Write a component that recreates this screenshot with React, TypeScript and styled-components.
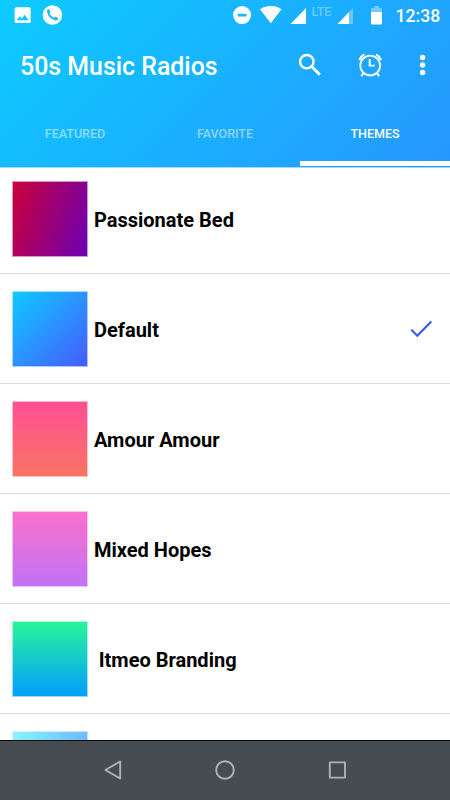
import React from "react";
import styled, { createGlobalStyle } from "styled-components";

const GlobalStyle = createGlobalStyle`
  * { box-sizing: border-box; }
  body { margin: 0; background: #fff; font-family: Roboto, sans-serif; }
`;

const Screen = styled.div`
  width: 450px;
  height: 800px;
  display: flex;
  flex-direction: column;
  overflow: hidden;
  background: #fff;
`;

const Header = styled.header`
  position: relative;
  z-index: 1;
  flex: none;
  height: 168px;
  display: flex;
  flex-direction: column;
  background: linear-gradient(135deg, #0dcbff 0%, #1ab0ff 52%, #2697ff 100%);
  border-bottom: 1px solid #a3d8ff;
  color: #fff;
`;

const StatusBar = styled.div`
  height: 32px;
  display: flex;
  align-items: flex-start;
`;

const Icon = styled.svg<{ $gap?: number }>`
  display: block;
  flex: none;
  margin-left: ${(p) => p.$gap ?? 0}px;
`;

const Network = styled.span`
  width: 20px;
  margin: 4px 0 0 4.5px;
  font-size: 12.5px;
  line-height: 16px;
  font-weight: 500;
  white-space: nowrap;
  color: rgba(255, 255, 255, 0.36);
`;

const Clock = styled.span`
  margin: 5px 0 0 12.5px;
  font-size: 17.6px;
  line-height: 22px;
  font-weight: 500;
  white-space: nowrap;
`;

const Toolbar = styled.div`
  height: 68px;
  display: flex;
  align-items: center;
  padding-left: 20px;
`;

const Title = styled.h1`
  margin: 0;
  width: 278px;
  padding-top: 2px;
  font-size: 24.9px;
  line-height: 30px;
  font-weight: 500;
  white-space: nowrap;
`;

const Tabs = styled.nav`
  height: 66px;
  display: grid;
  grid-template-columns: repeat(3, 1fr);
`;

const Tab = styled.div<{ $active?: boolean }>`
  display: flex;
  align-items: center;
  justify-content: center;
  padding-top: 6px;
  border-bottom: 5px solid ${(p) => (p.$active ? "#fff" : "transparent")};
  font-size: 12.5px;
  font-weight: 500;
  color: ${(p) => (p.$active ? "#fff" : "rgba(255,255,255,0.5)")};
`;

const ThemeList = styled.main`
  flex: 1;
  min-height: 0;
  margin-top: -4px;
  overflow: hidden;
`;

const ThemeRow = styled.div`
  height: 110px;
  display: flex;
  align-items: center;
  padding: 0 16px 0 12px;
  border-bottom: 1px solid #d9d9d9;
`;

const Swatch = styled.div<{ $fill: string }>`
  flex: none;
  width: 76px;
  height: 76px;
  margin-top: 1px;
  border: 1px solid rgba(255, 255, 255, 0.6);
  background: ${(p) => p.$fill} border-box;
`;

const Name = styled.span<{ $indent?: number }>`
  flex: 1;
  margin-left: ${(p) => 6 + (p.$indent ?? 0)}px;
  padding-top: 2px;
  font-size: 20px;
  line-height: 24px;
  font-weight: 700;
  color: #000;
  white-space: nowrap;
`;

const NavBar = styled.footer`
  flex: none;
  height: 60px;
  display: flex;
  align-items: center;
  justify-content: center;
  padding-bottom: 1px;
  gap: 88px;
  background: #454d52;
  border-top: 1px solid #050606;
`;

const themes = [
  { name: "Passionate Bed", fill: "linear-gradient(109deg, #cc0038, #6a00b4)" },
  { name: "Default", fill: "linear-gradient(135deg, #0dcbff, #485aff)", selected: true },
  { name: "Amour Amour", fill: "linear-gradient(#ff4f96, #f97462)" },
  { name: "Mixed Hopes", fill: "linear-gradient(#fa70cb, #c172f7)" },
  { name: "Itmeo Branding", fill: "linear-gradient(#2af598, #009efd)", indent: 4.7 },
  { name: "", fill: "linear-gradient(110deg, #89f7fe, #66a6ff)" },
];

export default function App() {
  return (
    <>
      <GlobalStyle />
      <Screen>
        <Header>
          <StatusBar>
            <Icon $gap={14} width="17" height="32" viewBox="14 0 17 32">
              <path fill="#fff" fillRule="evenodd" d="M16.2 7.3h12.9a1.6 1.6 0 0 1 1.6 1.6v12.5a1.6 1.6 0 0 1-1.6 1.6H16.2a1.6 1.6 0 0 1-1.6-1.6V8.9a1.6 1.6 0 0 1 1.6-1.6zM16.6 20.3h12l-3.9-5.5-2.8 3.7-2-2.3z" />
            </Icon>
            <Icon $gap={11} width="21" height="32" viewBox="42 0 21 32">
              <circle cx="52.4" cy="15" r="9.8" fill="#fff" />
              <path transform="translate(45.2 7.8) scale(.6)" fill="#19bdff" d="M7.5 9.5c1.2 2.8 3.6 5.4 6.6 7l2.7-1.6c.5-.3 1-.2 1.4.1l3 2.1c.5.4.6 1 .3 1.5-.8 1.5-2.2 2.6-3.9 2.4C10.5 20.3 3.5 13 3 5.9 2.9 4.3 3.9 3 5.3 2.3c.5-.2 1.1-.1 1.4.4l1.9 3.1c.3.4.3 1 0 1.4z" />
            </Icon>
            <Icon $gap={169} width="20" height="32" viewBox="232 0 20 32">
              <circle cx="242.1" cy="15.1" r="9" fill="#fff" />
              <rect x="237.6" y="13.8" width="9" height="2.7" rx=".6" fill="#1bbaff" />
            </Icon>
            <Icon $gap={7} width="24" height="32" viewBox="259 0 24 32">
              <path fill="#fff" d="M260 9.2C266.5 5 275 5 281.5 9.200L270.8 23.2z" />
            </Icon>
            <Icon $gap={7} width="17" height="32" viewBox="290 0 17 32">
              <path fill="#fff" d="M306 8v16h-15.5z" />
            </Icon>
            <Network>LTE</Network>
            <Icon $gap={5.5} width="17" height="32" viewBox="337 0 17 32">
              <path fill="#fff" opacity=".35" d="M353 8v16h-4V12z" />
              <path fill="#fff" d="M349 12v12h-11.5z" />
            </Icon>
            <Icon $gap={16} width="13" height="32" viewBox="370 0 13 32">
              <path fill="#fff" opacity=".38" d="M371 8h3.300V6h4.500v2h3.200v4h-11z" />
              <path fill="#fff" d="M371 12h11v11.600q0 .8-.8.8h-9.400q-.8 0-.8-.8z" />
            </Icon>
            <Clock>12:38</Clock>
          </StatusBar>
          <Toolbar>
            <Title>50s Music Radios</Title>
            <Icon width="24" height="26" viewBox="298 53 24 26" fill="none" stroke="#fff">
              <circle cx="306.8" cy="61.7" r="6.7" strokeWidth="2.4" />
              <path d="M311.6 66.4l8.3 8.3" strokeWidth="2.8" />
            </Icon>
            <Icon $gap={35} width="27" height="28" viewBox="357 52 27 28" fill="none" stroke="#fff">
              <circle cx="370.2" cy="65.5" r="9.9" strokeWidth="1.8" />
              <path d="M369.7 59v6.600h5" strokeWidth="1.9" />
              <path d="M359.3 60q1.6-3.8 5-5.600M376.100 54.400q3.400 1.800 5 5.600" strokeWidth="2.1" />
              <path d="M363.500 73l-2.200 3.300M376.900 73l2.200 3.300" strokeWidth="1.9" />
            </Icon>
            <Icon $gap={33} width="12" height="28" viewBox="417 52 12 28" fill="#fff">
              <circle cx="422.6" cy="57.5" r="2.65" />
              <circle cx="422.6" cy="65" r="2.65" />
              <circle cx="422.6" cy="72.5" r="2.65" />
            </Icon>
          </Toolbar>
          <Tabs>
            <Tab>FEATURED</Tab>
            <Tab>FAVORITE</Tab>
            <Tab $active>THEMES</Tab>
          </Tabs>
        </Header>
        <ThemeList>
          {themes.map((t) => (
            <ThemeRow key={t.fill}>
              <Swatch $fill={t.fill} />
              <Name $indent={t.indent}>{t.name}</Name>
              {t.selected && (
                <Icon width="25" height="24" viewBox="409 317 25 24">
                  <path d="M411.3 329.8l6 6 14-14.3" fill="none" stroke="#3b5bf0" strokeWidth="2.2" />
                </Icon>
              )}
            </ThemeRow>
          ))}
        </ThemeList>
        <NavBar>
          <Icon width="24" height="24" viewBox="0 0 24 24" fill="none" stroke="#afb3b5" strokeWidth="1.9">
            <path d="M4.4 12L19.2 3.500v17z" strokeLinejoin="round" />
          </Icon>
          <Icon width="24" height="24" viewBox="0 0 24 24" fill="none" stroke="#afb3b5" strokeWidth="1.9">
            <circle cx="12" cy="12" r="8.8" />
          </Icon>
          <Icon width="24" height="24" viewBox="0 0 24 24" fill="none" stroke="#afb3b5" strokeWidth="1.9">
            <rect x="4.8" y="4.4" width="15.2" height="15.2" rx=".3" />
          </Icon>
        </NavBar>
      </Screen>
    </>
  );
}
